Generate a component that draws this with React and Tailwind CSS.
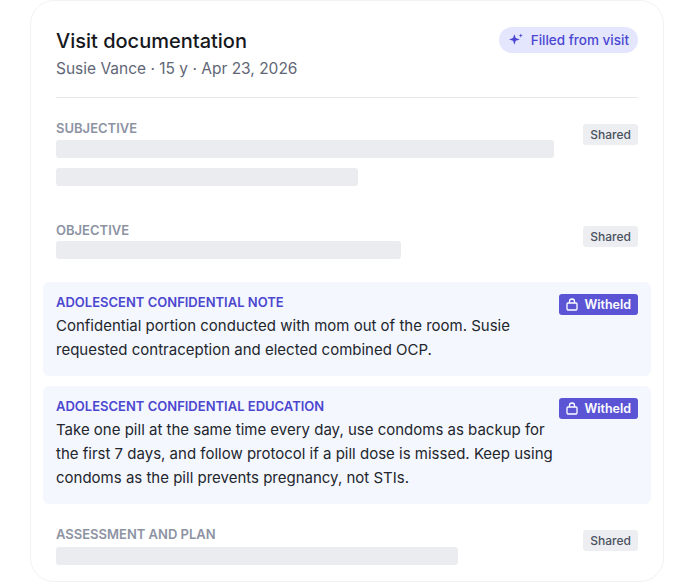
export default function App() {
  const Shared = () => (
    <span className="shrink-0 rounded-[3px] bg-[#eceef2] px-[7px] py-[3px] text-[12px] font-medium leading-[14px] text-[#4b5160]">Shared</span>
  );
  const Witheld = () => (
    <span className="flex shrink-0 items-center gap-[6px] rounded-[3px] bg-[#5b55d6] px-[7px] py-[3px] text-[12.5px] font-semibold leading-[15px] text-white">
      <svg width="12" height="13" viewBox="0 0 12 13" fill="none" stroke="currentColor" strokeWidth="1.3"><rect x="1" y="5" width="10" height="7" rx="1"/><path d="M3.5 5V3.5a2.5 2.5 0 0 1 5 0V5"/></svg>
      Witheld
    </span>
  );
  const Bar = ({ w, cls = "" }) => <div className={`h-[18px] rounded-[3px] bg-[#ebecf0] ${w} ${cls}`} />;
  return (
    <div className="flex h-[584px] w-[694px] justify-center bg-white pt-0" style={{ fontFamily: "Inter, 'Noto Sans', sans-serif" }}>
      <div className="h-[582px] w-[634px] rounded-[24px] border border-[#f1f2f5] bg-white px-[25px] pt-[26px]">
        <div className="flex items-start justify-between">
          <div>
            <div className="text-[20px] font-medium leading-[28px] text-[#16181d]">Visit documentation</div>
            <div className="mt-[2px] text-[15.5px] leading-[24px] text-[#5f6676]">Susie Vance · 15 y · Apr 23, 2026</div>
          </div>
          <div className="flex items-center gap-[6px] rounded-full bg-[#e3e6fd] px-[9px] py-[4px] text-[13.5px] font-medium leading-[18px] text-[#4b47d2]">
            <svg width="17" height="17" viewBox="0 0 24 24" fill="#4b47d2"><path d="M9 3l1.9 5.6L16.5 10.5 10.9 12.4 9 18 7.1 12.4 1.5 10.5 7.1 8.6z"/><path d="M18 2l.8 2.2L21 5l-2.2.8L18 8l-.8-2.2L15 5l2.2-.8z"/></svg>
            Filled from visit
          </div>
        </div>
        <div className="mt-[16px] h-px bg-[#e7e8ec]" />
        <div className="mt-[22px] flex justify-between">
          <div className="flex-1">
            <div className="text-[13px] font-semibold leading-[16px] text-[#8d93a3]">SUBJECTIVE</div>
            <Bar w="w-[498px]" cls="mt-[4px]" />
            <Bar w="w-[302px]" cls="mt-[10px]" />
          </div>
          <div className="pt-[1px]"><Shared /></div>
        </div>
        <div className="mt-[36px] flex justify-between">
          <div className="flex-1">
            <div className="text-[13px] font-semibold leading-[16px] text-[#8d93a3]">OBJECTIVE</div>
            <Bar w="w-[345px]" cls="mt-[3px]" />
          </div>
          <div className="pt-[1px]"><Shared /></div>
        </div>
        <div className="-mx-[13px] mt-[23px] flex justify-between rounded-[6px] bg-[#f4f7fe] px-[13px] pb-[14px] pt-[12px]">
          <div>
            <div className="text-[13px] font-semibold leading-[16px] text-[#4c47d0]">ADOLESCENT CONFIDENTIAL NOTE</div>
            <div className="mt-[4px] w-[490px] text-[15px] leading-[24px] text-[#23262d]">Confidential portion conducted with mom out of the room. Susie requested contraception and elected combined OCP.</div>
          </div>
          <div><Witheld /></div>
        </div>
        <div className="-mx-[13px] mt-[10px] flex justify-between rounded-[6px] bg-[#f4f7fe] px-[13px] pb-[14px] pt-[12px]">
          <div>
            <div className="text-[13px] font-semibold leading-[16px] text-[#4c47d0]">ADOLESCENT CONFIDENTIAL EDUCATION</div>
            <div className="mt-[4px] w-[500px] text-[15px] leading-[24px] text-[#23262d]">Take one pill at the same time every day, use condoms as backup for the first 7 days, and follow protocol if a pill dose is missed. Keep using condoms as the pill prevents pregnancy, not STIs.</div>
          </div>
          <div><Witheld /></div>
        </div>
        <div className="mt-[22px] flex justify-between">
          <div className="flex-1">
            <div className="text-[13px] font-semibold leading-[16px] text-[#8d93a3]">ASSESSMENT AND PLAN</div>
            <Bar w="w-[402px]" cls="mt-[5px]" />
          </div>
          <div className="pt-[1px]"><Shared /></div>
        </div>
      </div>
    </div>
  );
}
